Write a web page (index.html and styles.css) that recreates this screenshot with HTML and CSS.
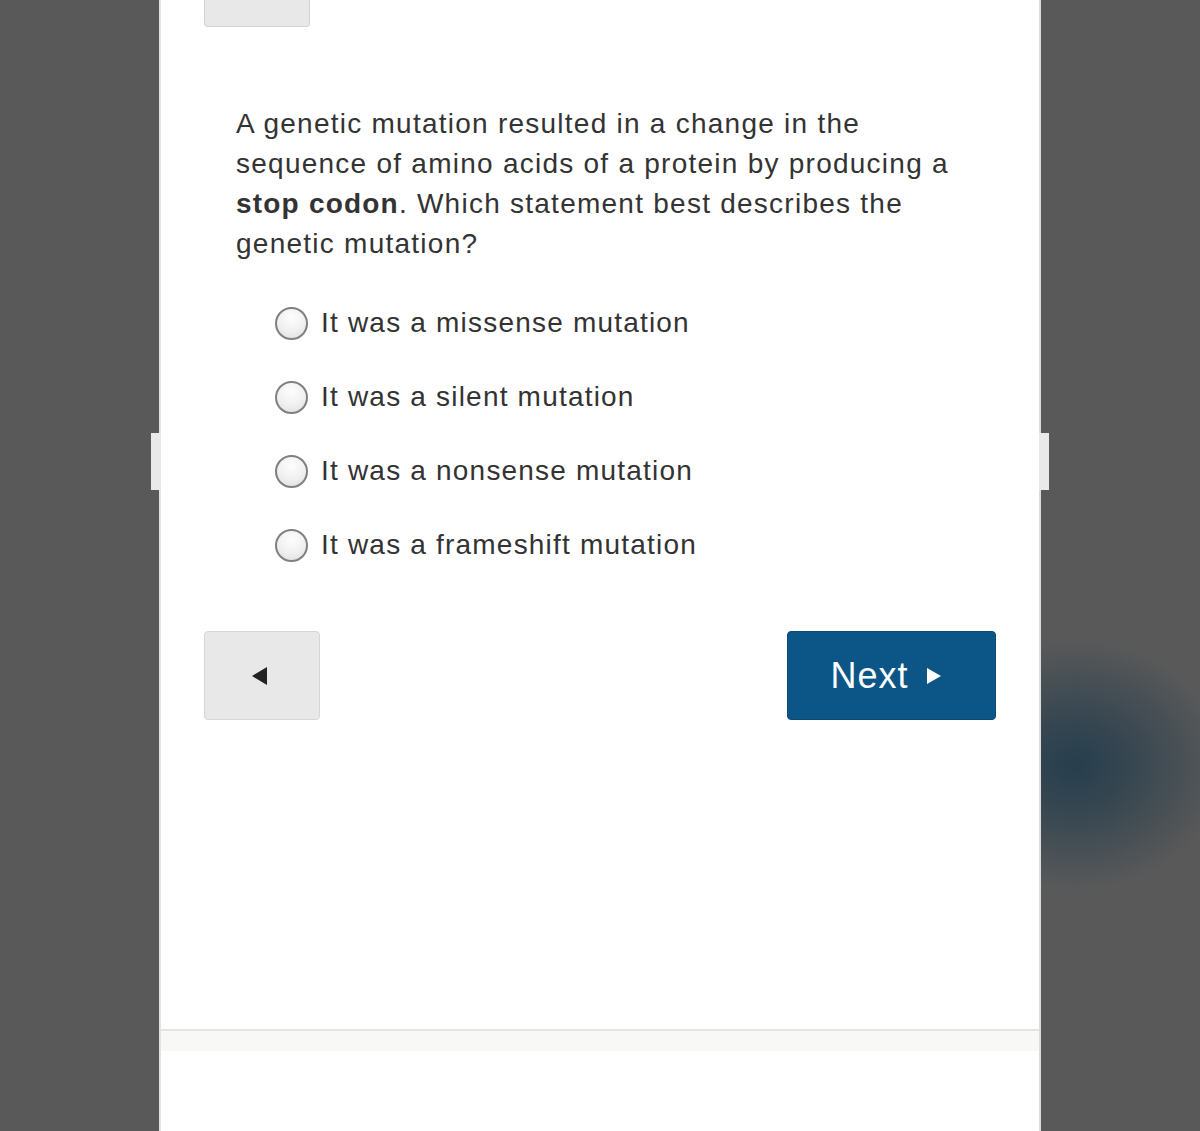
FILE: index.html
```html
<!DOCTYPE html>
<html>
<head>
<meta charset="utf-8">
<link rel="stylesheet" href="styles.css">
</head>
<body>
<div class="stage">
  <div class="tab tab-left"></div>
  <div class="panel">
    <div class="top-btn"></div>
    <div class="question">
      <p class="prompt">A genetic mutation resulted in a change in the sequence of amino acids of a protein by producing a <b>stop codon</b>. Which statement best describes the genetic mutation?</p>
      <ul class="options">
        <li class="option"><span class="radio"></span><span class="label">It was a missense mutation</span></li>
        <li class="option"><span class="radio"></span><span class="label">It was a silent mutation</span></li>
        <li class="option"><span class="radio"></span><span class="label">It was a nonsense mutation</span></li>
        <li class="option"><span class="radio"></span><span class="label">It was a frameshift mutation</span></li>
      </ul>
    </div>
    <div class="nav">
      <button class="btn-back"><span class="tri-left"></span></button>
      <button class="btn-next">Next<span class="tri-right"></span></button>
    </div>
    <div class="spacer"></div>
    <div class="footer-band"></div>
    <div class="footer"></div>
  </div>
  <div class="tab tab-right"></div>
</div>
</body>
</html>
```

FILE: styles.css
```css
* { box-sizing: border-box; }
html, body { margin: 0; padding: 0; }
body {
  width: 1200px;
  height: 1131px;
  overflow: hidden;
  background:
    radial-gradient(ellipse 150px 125px at 1075px 765px, rgba(38,62,78,1) 0%, rgba(45,65,78,0.75) 40%, rgba(89,89,89,0) 100%),
    #595959;
  font-family: "Helvetica Neue", Helvetica, "Liberation Sans", Arial, sans-serif;
}
.stage {
  position: relative;
  width: 1200px;
  height: 1131px;
  display: flex;
  justify-content: center;
}
.panel {
  width: 882px;
  height: 1131px;
  background: #fff;
  border-left: 2px solid #e3e3e3;
  border-right: 2px solid #dcdcdc;
  display: flex;
  flex-direction: column;
}
.tab {
  position: absolute;
  top: 433px;
  width: 10px;
  height: 57px;
  background: #e9e9e9;
}
.tab-left { left: 151px; }
.tab-right { left: 1039px; }
.top-btn {
  margin-left: 43px;
  width: 106px;
  height: 27px;
  background: #e8e8e8;
  border: 1px solid #d2d2d2;
  border-top: none;
  border-radius: 0 0 4px 4px;
}
.question {
  padding: 77px 0 0 75px;
}
.prompt {
  margin: 0;
  width: 728px;
  font-size: 28px;
  letter-spacing: 1.25px;
  line-height: 40px;
  color: #333;
}
.prompt b { font-weight: bold; color: #333; letter-spacing: 1.2px; }
.options {
  list-style: none;
  margin: 22px 0 0 0;
  padding: 0 0 0 39px;
}
.option {
  display: flex;
  align-items: center;
  height: 74px;
  gap: 13px;
}
.radio {
  width: 33px;
  height: 33px;
  border-radius: 50%;
  border: 2px solid #808080;
  background: radial-gradient(circle at 50% 30%, #fdfdfd 0%, #f0f0f0 55%, #dcdcdc 100%);
  flex: none;
}
.label {
  font-size: 28px;
  letter-spacing: 1.2px;
  color: #333;
}
.nav {
  display: flex;
  justify-content: space-between;
  padding: 49px 43px 0 43px;
}
.btn-back {
  width: 116px;
  height: 89px;
  background: #e8e8e8;
  border: 1px solid #d6d6d6;
  border-radius: 4px;
  display: flex;
  align-items: center;
  justify-content: center;
  padding: 0 6px 0 0;
}
.tri-left {
  width: 0; height: 0;
  border-top: 9px solid transparent;
  border-bottom: 9px solid transparent;
  border-right: 15px solid #222;
}
.btn-next {
  width: 209px;
  height: 89px;
  background: #0c5687;
  border: 1px solid #0a4a75;
  border-radius: 4px;
  color: #fff;
  font-family: "Helvetica Neue", Helvetica, "Liberation Sans", Arial, sans-serif;
  font-size: 36px;
  letter-spacing: 1px;
  display: flex;
  align-items: center;
  justify-content: center;
  padding: 0 12px 0 0;
}
.tri-right {
  display: inline-block;
  width: 0; height: 0;
  border-top: 8px solid transparent;
  border-bottom: 8px solid transparent;
  border-left: 14px solid #fff;
  margin-left: 18px;
}
.spacer { flex: 1; }
.footer-band {
  height: 22px;
  border-top: 2px solid #e4e4e4;
  background: #f8f8f6;
}
.footer {
  height: 80px;
  background: #fff;
}
```
